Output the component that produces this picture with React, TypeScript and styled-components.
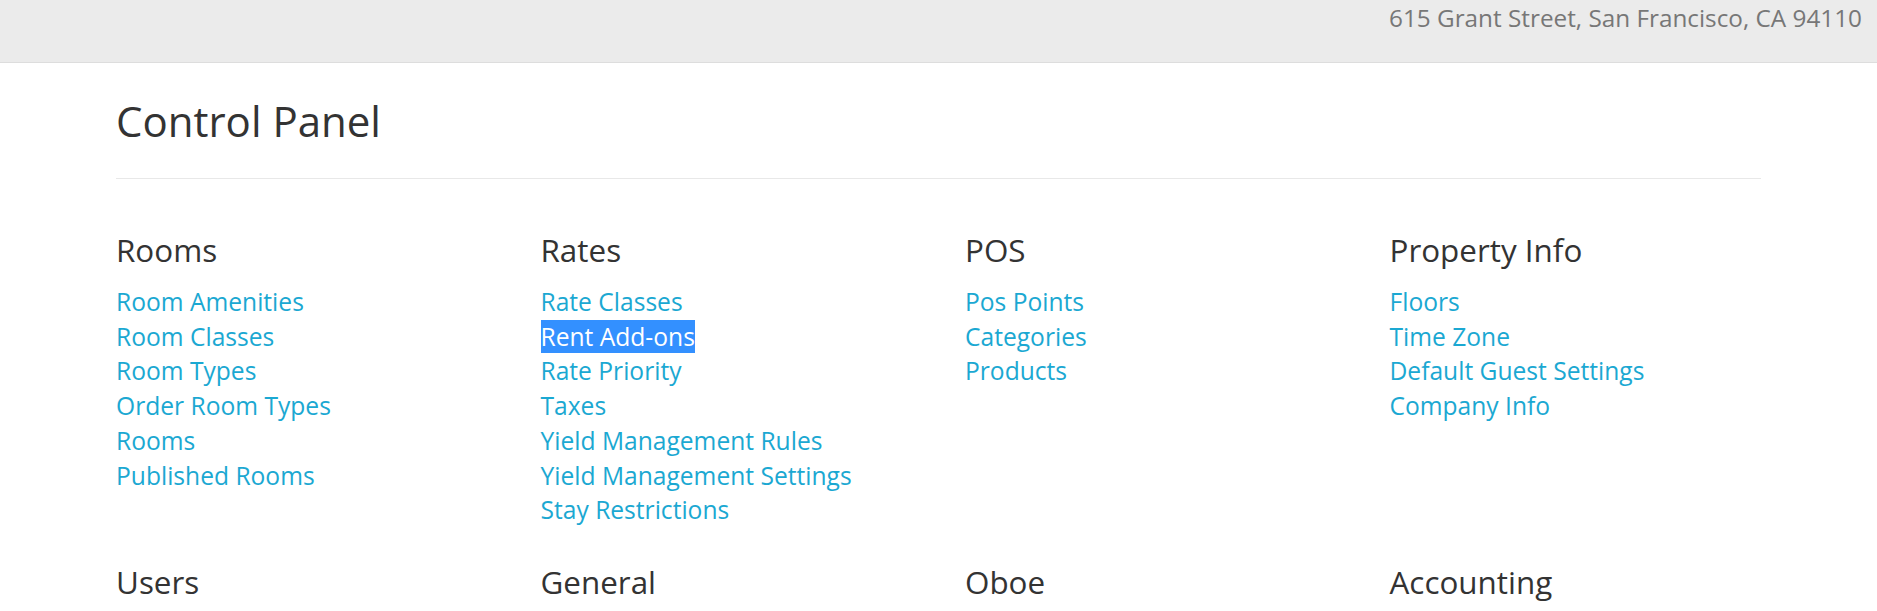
import React from "react";
import styled, { createGlobalStyle } from "styled-components";

const GlobalStyle = createGlobalStyle`
  html, body { margin: 0; padding: 0; background: #ffffff; }
  body { font-family: "Open Sans", "Noto Sans", Arial, sans-serif; color: #333333; }
`;

const TopBar = styled.header`
  box-sizing: border-box;
  height: 63px;
  background: #ebebeb;
  border-bottom: 1px solid #dddddd;
  display: flex;
  justify-content: flex-end;
  align-items: flex-start;
  padding: 4px 15px 0 0;
`;

const Address = styled.div`
  font-size: 24.3px;
  line-height: 28px;
  color: #777777;
`;

const Container = styled.main`
  width: 1645px;
  margin: 0 auto;
`;

const Title = styled.h1`
  margin: 35px 0 0;
  font-size: 42px;
  line-height: 46px;
  font-weight: 400;
  color: #333333;
`;

const Rule = styled.hr`
  margin: 34px 0 0;
  border: 0;
  border-top: 1px solid #e8e8e8;
`;

const Grid = styled.div`
  display: grid;
  grid-template-columns: repeat(4, 424.5px);
  row-gap: 37px;
  padding-top: 54px;
`;

const Section = styled.section`
  display: flex;
  flex-direction: column;
  align-items: flex-start;
`;

const SectionTitle = styled.h3`
  margin: 0 0 18px;
  font-size: 31.4px;
  line-height: 34px;
  font-weight: 400;
  color: #333333;
`;

const LinkList = styled.ul`
  list-style: none;
  margin: 0;
  padding: 0;
`;

const LinkItem = styled.li`
  font-size: 24.6px;
  line-height: 34.7px;
`;

const Link = styled.a<{ $selected?: boolean }>`
  color: ${(p) => (p.$selected ? "#ffffff" : "#1ba8d2")};
  background: ${(p) => (p.$selected ? "#3390ff" : "transparent")};
  text-decoration: none;
  cursor: pointer;
`;

type Group = { title: string; links: string[]; selected?: string };

const groups: Group[] = [
  {
    title: "Rooms",
    links: ["Room Amenities", "Room Classes", "Room Types", "Order Room Types", "Rooms", "Published Rooms"],
  },
  {
    title: "Rates",
    links: [
      "Rate Classes",
      "Rent Add-ons",
      "Rate Priority",
      "Taxes",
      "Yield Management Rules",
      "Yield Management Settings",
      "Stay Restrictions",
    ],
    selected: "Rent Add-ons",
  },
  { title: "POS", links: ["Pos Points", "Categories", "Products"] },
  {
    title: "Property Info",
    links: ["Floors", "Time Zone", "Default Guest Settings", "Company Info"],
  },
  { title: "Users", links: ["Users", "Roles"] },
  { title: "General", links: ["Settings"] },
  { title: "Oboe", links: ["Settings"] },
  { title: "Accounting", links: ["Accounts"] },
];

export default function App() {
  return (
    <>
      <GlobalStyle />
      <TopBar>
        <Address>615 Grant Street, San Francisco, CA 94110</Address>
      </TopBar>
      <Container>
        <Title>Control Panel</Title>
        <Rule />
        <Grid>
          {groups.map((g) => (
            <Section key={g.title}>
              <SectionTitle>{g.title}</SectionTitle>
              <LinkList>
                {g.links.map((l) => (
                  <LinkItem key={l}>
                    <Link $selected={g.selected === l}>{l}</Link>
                  </LinkItem>
                ))}
              </LinkList>
            </Section>
          ))}
        </Grid>
      </Container>
    </>
  );
}
